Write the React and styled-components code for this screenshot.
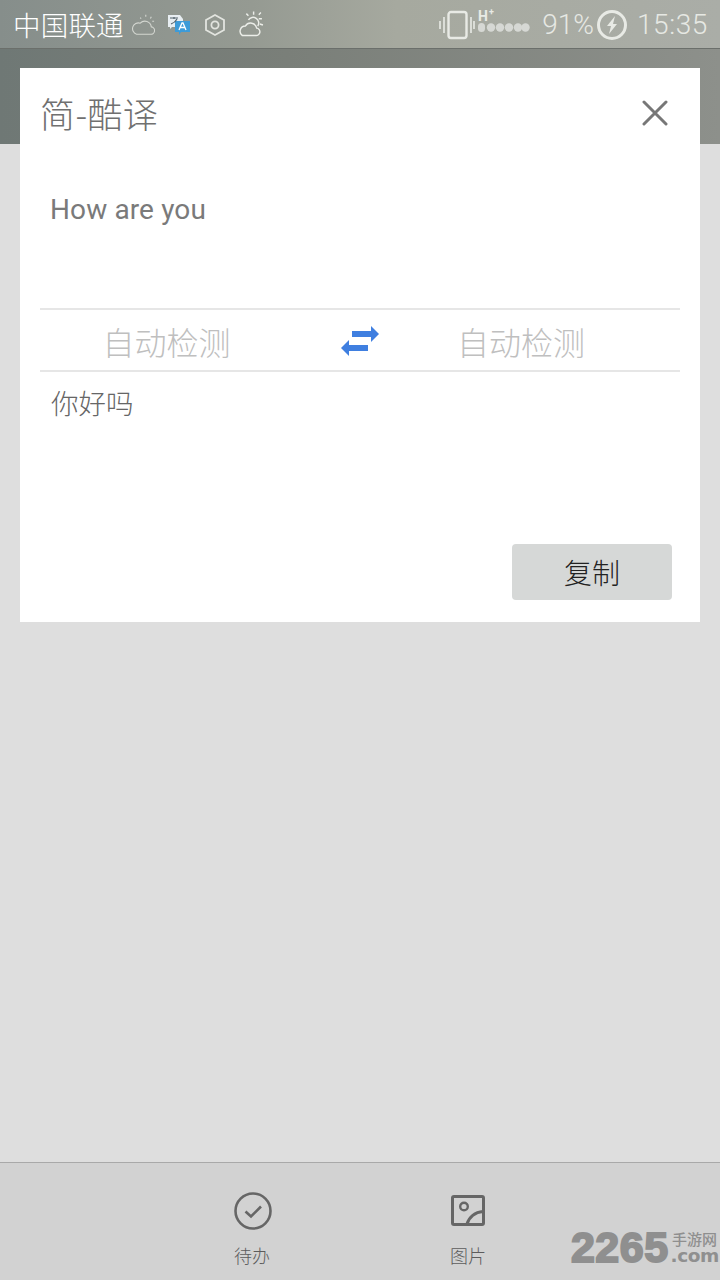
import React from 'react';
import styled, { createGlobalStyle } from 'styled-components';

const cjk = '"Noto Sans CJK SC", "Noto Sans", sans-serif';

const GlobalStyle = createGlobalStyle`
  html, body {
    margin: 0;
    padding: 0;
    background: #dedede;
  }
  * {
    box-sizing: border-box;
  }
`;

const Screen = styled.div`
  position: relative;
  display: flex;
  flex-direction: column;
  width: 720px;
  height: 1280px;
  overflow: hidden;
  background: #dedede;
  font-family: Roboto, ${cjk};
`;

const StatusBar = styled.div`
  display: flex;
  align-items: center;
  justify-content: space-between;
  height: 49px;
  padding: 2px 12px 0 13px;
  flex-shrink: 0;
  background: linear-gradient(90deg, #868e8b 0%, #959a92 35%, #a6a99f 55%, #aaada7 100%);
  border-bottom: 1px solid #6b6f6b;
  color: #ffffff;
`;

const StatusGroup = styled.div`
  display: flex;
  align-items: center;
`;

const Carrier = styled.span`
  margin: -3px 7px 0 0;
  font-family: ${cjk};
  font-size: 27.5px;
  font-weight: 300;
  line-height: 46px;
  letter-spacing: 0.2px;
  white-space: nowrap;
`;

const StatusText = styled.span`
  margin-left: ${props => props.$gap || '0'};
  font-size: 28px;
  font-weight: 300;
  line-height: 46px;
  letter-spacing: ${props => props.$spacing || '0'};
  color: #e6e8e3;
  white-space: nowrap;
`;

const Banner = styled.div`
  height: 95px;
  flex-shrink: 0;
  background: linear-gradient(90deg, #6f7875 0%, #7a7f79 40%, #8d908b 100%);
`;

const Dialog = styled.section`
  position: absolute;
  top: 68px;
  left: 20px;
  display: flex;
  flex-direction: column;
  width: 680px;
  height: 554px;
  padding: 0 20px;
  background: #ffffff;
`;

const DialogHeader = styled.header`
  display: flex;
  align-items: center;
  justify-content: space-between;
  height: 90px;
  flex-shrink: 0;
  padding: 0 12px 0 0;
`;

const DialogTitle = styled.h1`
  margin: -2px 0 0;
  font-family: ${cjk};
  font-size: 35px;
  font-weight: 300;
  letter-spacing: 0.4px;
  color: #707070;
`;

const SourceText = styled.div`
  height: 152px;
  flex-shrink: 0;
  padding: 32px 0 0 10px;
  font-family: Roboto, sans-serif;
  font-size: 28px;
  letter-spacing: 0.12px;
  line-height: 40px;
  color: #7a7a7a;
  border-bottom: 2px solid #e6e6e6;
`;

const LanguageRow = styled.div`
  display: grid;
  grid-template-columns: 253px 134px 188px;
  align-items: center;
  height: 62px;
  flex-shrink: 0;
  border-bottom: 2px solid #e6e6e6;
`;

const LanguageName = styled.span`
  justify-self: center;
  padding-top: 2px;
  font-family: ${cjk};
  font-size: 32px;
  font-weight: 300;
  line-height: 58px;
  color: #bfbfbf;
`;

const SwapIcon = styled.svg`
  justify-self: center;
  width: 40px;
  height: 32px;
  margin-top: 2px;
`;

const TargetText = styled.div`
  flex: 1;
  padding: 10px 0 0 11px;
  font-family: ${cjk};
  font-size: 27.5px;
  font-weight: 300;
  line-height: 40px;
  color: #666666;
`;

const DialogFooter = styled.footer`
  display: flex;
  justify-content: flex-end;
  padding: 0 8px 22px 0;
`;

const CopyButton = styled.button`
  width: 160px;
  height: 56px;
  padding: 0;
  border: 0;
  border-radius: 4px;
  background: #d6d8d7;
  font-family: ${cjk};
  font-size: 28px;
  font-weight: 300;
  color: #222222;
`;

const Content = styled.div`
  flex: 1;
`;

const BottomBar = styled.nav`
  display: flex;
  justify-content: center;
  gap: 128px;
  height: 118px;
  flex-shrink: 0;
  padding: 28px 0 0 0;
  background: #d2d2d2;
  border-top: 1px solid #a9a9a9;
`;

const BarItem = styled.div`
  display: flex;
  flex-direction: column;
  align-items: center;
  width: 88px;
  color: #666666;
`;

const BarIcon = styled.svg`
  width: 40px;
  height: 40px;
  margin-bottom: 10px;
  color: #666666;
`;

const BarLabel = styled.span`
  font-family: ${cjk};
  font-size: 18px;
  font-weight: 300;
  line-height: 28px;
  color: #5c5c5c;
`;

const Watermark = styled.div`
  position: absolute;
  right: 1px;
  bottom: 16px;
  display: flex;
  align-items: center;
  gap: 2px;
  color: #8f8f8f;
`;

const WatermarkNumber = styled.span`
  font-family: "Liberation Sans", sans-serif;
  font-size: 43px;
  font-weight: 700;
  line-height: 34px;
  letter-spacing: 0.5px;
  -webkit-text-stroke: 2px #8f8f8f;
`;

const WatermarkSide = styled.div`
  display: flex;
  flex-direction: column;
  align-items: flex-end;
  gap: 3px;
`;

const WatermarkCn = styled.span`
  margin-right: 2px;
  font-family: ${cjk};
  font-size: 15px;
  font-weight: 500;
  line-height: 14px;
`;

const WatermarkCom = styled.span`
  font-family: "DejaVu Sans", sans-serif;
  font-size: 18.5px;
  font-weight: 700;
  line-height: 13px;
  letter-spacing: -0.4px;
`;

const Glyph = styled.svg`
  display: block;
  flex-shrink: 0;
  margin: ${props => props.$margin || '0'};
`;

const CloudIcon = () => (
  <Glyph width="24" height="26" viewBox="0 0 26 26" fill="none" stroke="#d3d6d0" strokeWidth="1.2">
    <path d="M6 23h15a4 4 0 0 0 1-8 7 7 0 0 0-12-4 6 6 0 0 0-4 12z" />
    <path d="M10 5l1 1M16 2v2M22 4l-1 2M25 9h-2" />
  </Glyph>
);

const TranslateIcon = () => (
  <Glyph $margin="0 0 0 12px" width="24" height="22" viewBox="0 0 24 22">
    <path d="M1 1h12l3 4v8H5l-2 2v-2H1z" fill="#e8eef2" />
    <path d="M8 7h15v11h-9l-2 3v-3H8z" fill="#3d9bd8" />
    <path d="M3 4h8M7 3v2M4 10c3-1 5-3 6-5" stroke="#52616b" strokeWidth="1.2" fill="none" />
    <path d="M12 16l3-7h1l3 7M13.5 13.5h4" stroke="#ffffff" strokeWidth="1.3" fill="none" />
  </Glyph>
);

const HexIcon = () => (
  <Glyph $margin="0 0 0 13px" width="22" height="24" viewBox="0 0 22 24" fill="none" stroke="#e2e4df" strokeWidth="1.8">
    <path d="M11 2l9 5v10l-9 5-9-5V7z" />
    <circle cx="11" cy="12" r="3.6" />
  </Glyph>
);

const SunCloudIcon = () => (
  <Glyph $margin="-2px 0 0 11px" width="27" height="28" viewBox="0 0 26 26" fill="none" stroke="#eceee9" strokeWidth="1.4">
    <path d="M5 24h13a3.5 3.5 0 0 0 1-7 6 6 0 0 0-11-2 5 5 0 0 0-3 9z" />
    <path d="M11 9a5 5 0 1 1 9 6" />
    <path d="M16 1v3M24 8h-3M9 3l2 2M23 2l-2 2M25 14l-3-1" />
  </Glyph>
);

const VibrateIcon = () => (
  <Glyph width="36" height="30" viewBox="0 0 36 30" fill="none" stroke="#e8eae5">
    <rect x="9.5" y="2" width="18" height="26" rx="2.5" strokeWidth="2.4" />
    <path d="M1 11v8M5 7v16M32 7v16M35 11v8" strokeWidth="1.6" />
  </Glyph>
);

const SignalIcon = () => (
  <Glyph $margin="-5px 0 0 3px" width="52" height="30" viewBox="0 0 52 30">
    <text x="0" y="13" fontFamily="Roboto, sans-serif" fontSize="14" fontWeight="700" fill="#e8eae5">H</text>
    <text x="11" y="7" fontFamily="Roboto, sans-serif" fontSize="9" fontWeight="700" fill="#e8eae5">+</text>
    <g fill="#d6d8d4">
      <rect x="0" y="15" width="7" height="9" rx="3.5" />
      <circle cx="13" cy="19.5" r="4.2" />
      <circle cx="22" cy="19.5" r="4.2" />
      <circle cx="31" cy="19.5" r="4.2" />
      <circle cx="40" cy="19.5" r="4.2" />
      <circle cx="47.5" cy="19.5" r="4.2" />
    </g>
  </Glyph>
);

const BatteryIcon = () => (
  <Glyph $margin="0 9px 0 2px" width="32" height="32" viewBox="0 0 32 32" fill="none">
    <circle cx="16" cy="16" r="13.5" stroke="#e8eae5" strokeWidth="3" />
    <path d="M19 7l-8 10h4l-2 8 8-10h-4z" fill="#e8eae5" />
  </Glyph>
);

export default function App() {
  return (
    <Screen>
      <GlobalStyle />
      <StatusBar>
        <StatusGroup>
          <Carrier>中国联通</Carrier>
          <CloudIcon />
          <TranslateIcon />
          <HexIcon />
          <SunCloudIcon />
        </StatusGroup>
        <StatusGroup>
          <VibrateIcon />
          <SignalIcon />
          <StatusText $gap="12px">91%</StatusText>
          <BatteryIcon />
          <StatusText $spacing="0.6px">15:35</StatusText>
        </StatusGroup>
      </StatusBar>
      <Banner />
      <Content />
      <BottomBar>
        <BarItem>
          <BarIcon viewBox="0 0 40 40" fill="none" stroke="currentColor">
            <circle cx="21" cy="20" r="17.5" strokeWidth="2.6" />
            <path d="M13.5 20.5l5.5 5 10-10" strokeWidth="2.6" />
          </BarIcon>
          <BarLabel>待办</BarLabel>
        </BarItem>
        <BarItem>
          <BarIcon viewBox="0 0 40 40" fill="none" stroke="currentColor">
            <rect x="4.5" y="5.5" width="31" height="28" rx="1.5" strokeWidth="3" />
            <circle cx="16" cy="15.5" r="3.8" strokeWidth="2.4" />
            <path d="M19 33c2-7 8-12 16-12.5" strokeWidth="3" />
          </BarIcon>
          <BarLabel>图片</BarLabel>
        </BarItem>
      </BottomBar>
      <Dialog>
        <DialogHeader>
          <DialogTitle>简-酷译</DialogTitle>
          <svg width="26" height="26" viewBox="0 0 26 26" fill="none" stroke="#777777" strokeWidth="3" strokeLinecap="round">
            <path d="M2 2l22 22M24 2L2 24" />
          </svg>
        </DialogHeader>
        <SourceText>How are you</SourceText>
        <LanguageRow>
          <LanguageName>自动检测</LanguageName>
          <SwapIcon viewBox="0 0 40 32">
            <path d="M39 9l-8-8v5H12v6h19v5zM1 23l8-8v5h19v6H9v5z" fill="#3f7fe0" />
          </SwapIcon>
          <LanguageName>自动检测</LanguageName>
        </LanguageRow>
        <TargetText>你好吗</TargetText>
        <DialogFooter>
          <CopyButton>复制</CopyButton>
        </DialogFooter>
      </Dialog>
      <Watermark>
        <WatermarkNumber>2265</WatermarkNumber>
        <WatermarkSide>
          <WatermarkCn>手游网</WatermarkCn>
          <WatermarkCom>.com</WatermarkCom>
        </WatermarkSide>
      </Watermark>
    </Screen>
  );
}
